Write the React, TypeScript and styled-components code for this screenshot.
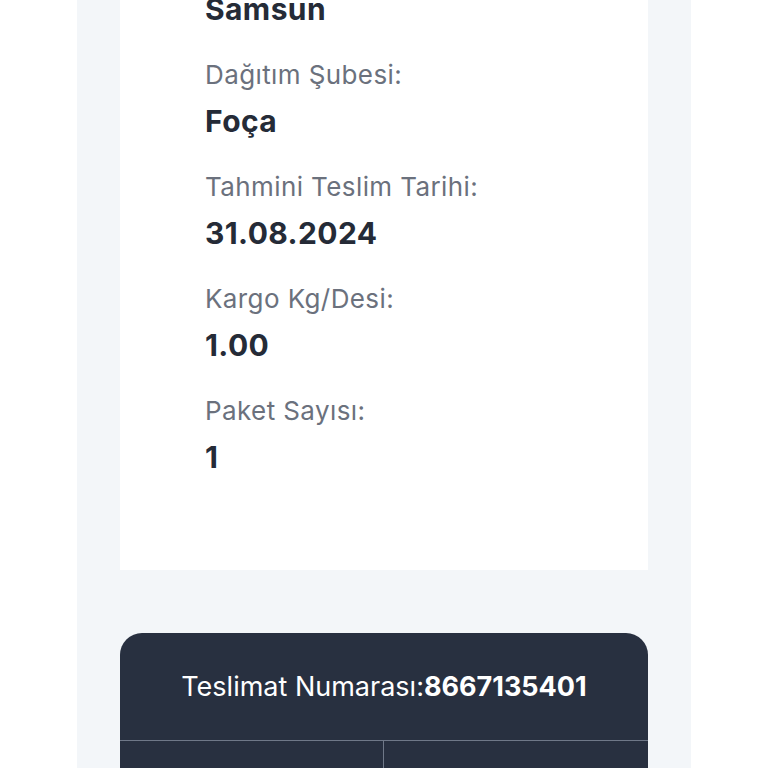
import styled, { createGlobalStyle } from "styled-components"

const GlobalStyle = createGlobalStyle`
  html, body {
    margin: 0;
    padding: 0;
    background: #ffffff;
    font-family: "Inter", "Noto Sans", "Liberation Sans", sans-serif;
  }
`

const Page = styled.div`
  display: flex;
  justify-content: center;
  margin-top: -101px;
`

const Panel = styled.div`
  width: 614px;
  background: #f3f6f9;
  padding: 0 43px 0;
  box-sizing: border-box;
  display: flex;
  flex-direction: column;
  gap: 63px;
`

const InfoCard = styled.div`
  background: #ffffff;
  padding: 46px 85px 95px;
  display: flex;
  flex-direction: column;
  gap: 30px;
`

const Field = styled.div`
  display: flex;
  flex-direction: column;
  gap: 10px;
`

const Label = styled.div`
  font-size: 26px;
  line-height: 36px;
  letter-spacing: 0.4px;
  color: #6b717d;
  font-weight: 400;
`

const Value = styled.div`
  font-size: 30px;
  line-height: 36px;
  letter-spacing: 0.4px;
  color: #252b37;
  font-weight: 700;
`

const DeliveryCard = styled.div`
  background: #283040;
  border-radius: 22px 22px 0 0;
  color: #ffffff;
  overflow: hidden;
`

const DeliveryHeader = styled.div`
  height: 107px;
  display: flex;
  align-items: center;
  justify-content: center;
  font-size: 27px;
  border-bottom: 1px solid #6f7888;

  strong {
    font-weight: 700;
  }
`

const ActionRow = styled.div`
  display: grid;
  grid-template-columns: 1fr 1fr;
  height: 120px;
`

const ActionCell = styled.div<{ divided?: boolean }>`
  border-right: ${(p) => (p.divided ? "1px solid #6f7888" : "none")};
`

const fields = [
  { label: "Çıkış Şubesi:", value: "Samsun" },
  { label: "Dağıtım Şubesi:", value: "Foça" },
  { label: "Tahmini Teslim Tarihi:", value: "31.08.2024" },
  { label: "Kargo Kg/Desi:", value: "1.00" },
  { label: "Paket Sayısı:", value: "1" },
]

export default function App() {
  return (
    <>
      <GlobalStyle />
      <Page>
        <Panel>
          <InfoCard>
            {fields.map((f) => (
              <Field key={f.label}>
                <Label>{f.label}</Label>
                <Value>{f.value}</Value>
              </Field>
            ))}
          </InfoCard>
          <DeliveryCard>
            <DeliveryHeader>
              <span>
                Teslimat Numarası:<strong>8667135401</strong>
              </span>
            </DeliveryHeader>
            <ActionRow>
              <ActionCell divided />
              <ActionCell />
            </ActionRow>
          </DeliveryCard>
        </Panel>
      </Page>
    </>
  )
}
